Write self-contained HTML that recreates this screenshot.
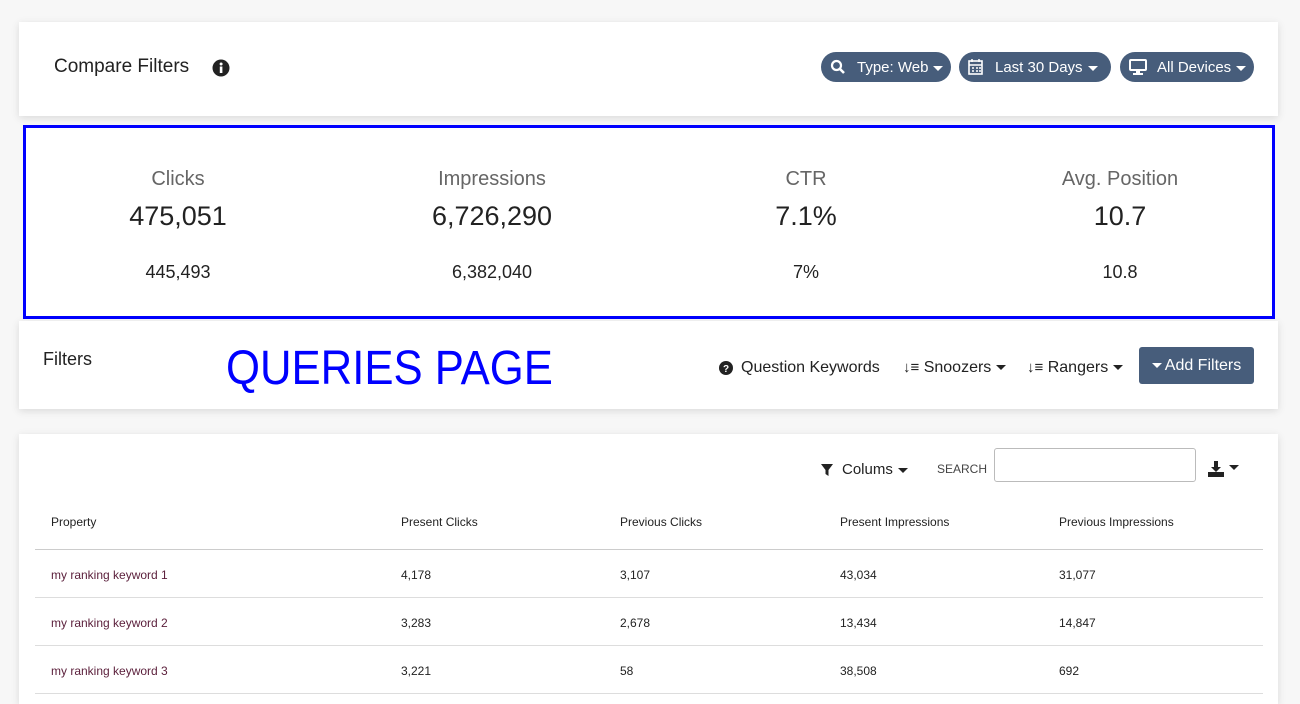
<!DOCTYPE html>
<html><head><meta charset="utf-8"><style>
body{margin:0;width:1300px;height:698px;overflow:hidden;background:#f7f7f7;font-family:"Liberation Sans",sans-serif;color:#222;position:relative}
.card{position:absolute;background:#fff;box-shadow:0 2px 8px rgba(0,0,0,.12)}
.pill{position:absolute;top:52px;height:30px;border-radius:15px;background:#475d7b;color:#fff;font-size:15px;line-height:31px;box-sizing:border-box;padding-left:36px}
.pill svg{position:absolute;left:9px;top:7px}
.car{display:inline-block;width:0;height:0;border-left:5px solid transparent;border-right:5px solid transparent;border-top:5px solid currentColor;vertical-align:middle;margin-left:5px}
.stat{position:absolute;width:300px;text-align:center}
.stat .l{font-size:20px;color:#666;position:absolute;top:40px;width:100%}
.stat .v{font-size:27px;color:#222;position:absolute;top:73px;width:100%}
.stat .p{font-size:18px;color:#222;position:absolute;top:134px;width:100%}
.tb{position:absolute;font-size:12px;color:#222}
.hr{position:absolute;left:35px;width:1228px;height:1px;background:#ddd}
</style></head><body>
<div class="card" style="left:19px;top:22px;width:1259px;height:94px">
<div style="position:absolute;left:35px;top:34px;font-size:19px;color:#222">Compare Filters</div>
<svg style="position:absolute;left:193px;top:37px" width="18" height="18" viewBox="0 0 18 18"><circle cx="9" cy="9" r="8.5" fill="#222"/><rect x="7.8" y="7.5" width="2.6" height="6.5" fill="#fff"/><circle cx="9.1" cy="5" r="1.5" fill="#fff"/></svg>
</div>
<div class="pill" style="left:821px;width:130px"><svg width="16" height="16" viewBox="0 0 16 16"><circle cx="6.5" cy="6.5" r="4.5" stroke="#fff" stroke-width="2.2" fill="none"/><line x1="10" y1="10" x2="14" y2="14" stroke="#fff" stroke-width="2.6"/></svg>Type: Web<span class="car"></span></div>
<div class="pill" style="left:959px;width:152px"><svg width="16" height="16" viewBox="0 0 16 16"><rect x="1" y="2" width="13" height="13" fill="none" stroke="#fff" stroke-width="1.6"/><path d="M1 6h13M4 9h2M8 9h2M4 12h2M8 12h2M11 9h2M11 12h2M4 0v3M11 0v3" stroke="#fff" stroke-width="1.5"/></svg>Last 30 Days<span class="car"></span></div>
<div class="pill" style="left:1120px;width:134px;padding-left:37px"><svg width="18" height="16" viewBox="0 0 18 16"><rect x="1" y="1" width="16" height="10" rx="1" fill="none" stroke="#fff" stroke-width="2"/><rect x="7" y="11" width="4" height="3" fill="#fff"/><rect x="4" y="14" width="10" height="2" fill="#fff"/></svg>All Devices<span class="car"></span></div>

<div style="position:absolute;left:23px;top:125px;width:1246px;height:188px;border:3px solid #0000ff;background:#fff">
<div class="stat" style="left:2px"><div class="l">Clicks</div><div class="v">475,051</div><div class="p">445,493</div></div>
<div class="stat" style="left:316px"><div class="l">Impressions</div><div class="v">6,726,290</div><div class="p">6,382,040</div></div>
<div class="stat" style="left:630px"><div class="l">CTR</div><div class="v">7.1%</div><div class="p">7%</div></div>
<div class="stat" style="left:944px"><div class="l">Avg. Position</div><div class="v">10.7</div><div class="p">10.8</div></div>
</div>

<div class="card" style="left:19px;top:321px;width:1259px;height:88px">
<div style="position:absolute;left:24px;top:28px;font-size:18px">Filters</div>
<div style="position:absolute;left:207px;top:20px;font-size:48px;color:#0000ff;transform:scaleX(0.91);transform-origin:left;white-space:nowrap">QUERIES PAGE</div>
<svg style="position:absolute;left:700px;top:40px" width="14" height="14" viewBox="0 0 14 14"><circle cx="7" cy="7" r="7" fill="#222"/><text x="7" y="11" font-size="10" font-weight="bold" fill="#fff" text-anchor="middle" font-family="Liberation Sans">?</text></svg>
<div style="position:absolute;left:722px;top:38px;font-size:16px">Question Keywords</div>
<div style="position:absolute;left:884px;top:38px;font-size:16px"><b style="font-size:15px">↓≡</b> Snoozers<span class="car"></span></div>
<div style="position:absolute;left:1008px;top:38px;font-size:16px"><b style="font-size:15px">↓≡</b> Rangers<span class="car"></span></div>
<div style="position:absolute;left:1120px;top:26px;width:115px;height:37px;background:#475d7b;border-radius:3px;color:#fff;font-size:16px;line-height:38px;text-align:center"><span class="car" style="margin:0 3px 0 0;color:#fff"></span>Add Filters</div>
</div>

<div class="card" style="left:19px;top:434px;width:1259px;height:270px"></div>
<svg style="position:absolute;left:820px;top:463px" width="14" height="14" viewBox="0 0 14 14"><path d="M1 1h12L8.5 7v6L5.5 11V7z" fill="#222"/></svg>
<div style="position:absolute;left:842px;top:461px;font-size:15px">Colums<span class="car"></span></div>
<div style="position:absolute;left:937px;top:462px;font-size:12px;color:#444">SEARCH</div>
<div style="position:absolute;left:994px;top:448px;width:200px;height:32px;border:1px solid #bbb;border-radius:3px;background:#fff"></div>
<svg style="position:absolute;left:1208px;top:461px" width="16" height="16" viewBox="0 0 16 16"><path d="M6 0h4v6h3l-5 5-5-5h3z" fill="#222"/><rect x="0" y="11" width="16" height="5" fill="#222"/></svg>
<span class="car" style="position:absolute;left:1229px;top:465px;margin:0"></span>

<div class="tb" style="left:51px;top:515px">Property</div>
<div class="tb" style="left:401px;top:515px">Present Clicks</div>
<div class="tb" style="left:620px;top:515px">Previous Clicks</div>
<div class="tb" style="left:840px;top:515px">Present Impressions</div>
<div class="tb" style="left:1059px;top:515px">Previous Impressions</div>
<div class="hr" style="top:549px;background:#ccc"></div>
<div class="tb" style="left:51px;top:568px;color:#5a1e3a">my ranking keyword 1</div><div class="tb" style="left:401px;top:568px">4,178</div><div class="tb" style="left:620px;top:568px">3,107</div><div class="tb" style="left:840px;top:568px">43,034</div><div class="tb" style="left:1059px;top:568px">31,077</div>
<div class="hr" style="top:597px"></div>
<div class="tb" style="left:51px;top:616px;color:#5a1e3a">my ranking keyword 2</div><div class="tb" style="left:401px;top:616px">3,283</div><div class="tb" style="left:620px;top:616px">2,678</div><div class="tb" style="left:840px;top:616px">13,434</div><div class="tb" style="left:1059px;top:616px">14,847</div>
<div class="hr" style="top:645px"></div>
<div class="tb" style="left:51px;top:664px;color:#5a1e3a">my ranking keyword 3</div><div class="tb" style="left:401px;top:664px">3,221</div><div class="tb" style="left:620px;top:664px">58</div><div class="tb" style="left:840px;top:664px">38,508</div><div class="tb" style="left:1059px;top:664px">692</div>
<div class="hr" style="top:693px"></div>
</body></html>
